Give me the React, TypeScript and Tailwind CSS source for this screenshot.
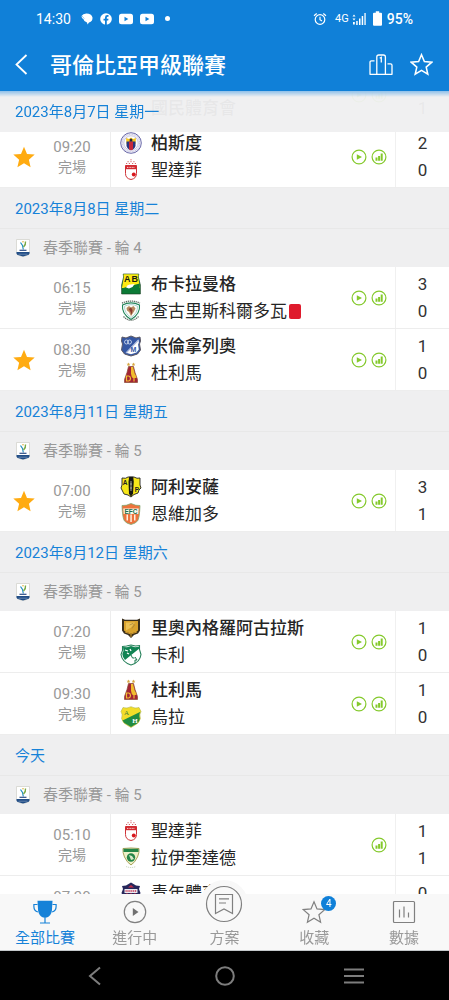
import React from 'react';

type TeamKey =
  | 'pasto' | 'santafe' | 'bucaramanga' | 'jaguares' | 'millonarios' | 'tolima'
  | 'alianza' | 'envigado' | 'rionegro' | 'cali' | 'huila' | 'equidad' | 'junior' | 'nacional';

interface Side { name: string; crest: TeamKey; score: number; winner?: boolean; redCard?: boolean }
interface Match { time: string; starred?: boolean; home?: Side; away?: Side; video?: boolean; stats?: boolean }
interface Day { date: string; round?: string; matches: Match[] }

const openingMatches: Match[] = [
  { time: '', away: { name: '國民體育會', crest: 'nacional', score: 1, winner: true }, video: true, stats: true },
  {
    time: '09:20', starred: true, video: true, stats: true,
    home: { name: '柏斯度', crest: 'pasto', score: 2, winner: true },
    away: { name: '聖達菲', crest: 'santafe', score: 0 },
  },
];

const days: Day[] = [
  {
    date: '2023年8月8日 星期二', round: '春季聯賽 - 輪 4',
    matches: [
      {
        time: '06:15', video: true, stats: true,
        home: { name: '布卡拉曼格', crest: 'bucaramanga', score: 3, winner: true },
        away: { name: '查古里斯科爾多瓦', crest: 'jaguares', score: 0, redCard: true },
      },
      {
        time: '08:30', starred: true, video: true, stats: true,
        home: { name: '米倫拿列奧', crest: 'millonarios', score: 1, winner: true },
        away: { name: '杜利馬', crest: 'tolima', score: 0 },
      },
    ],
  },
  {
    date: '2023年8月11日 星期五', round: '春季聯賽 - 輪 5',
    matches: [
      {
        time: '07:00', starred: true, video: true, stats: true,
        home: { name: '阿利安薩', crest: 'alianza', score: 3, winner: true },
        away: { name: '恩維加多', crest: 'envigado', score: 1 },
      },
    ],
  },
  {
    date: '2023年8月12日 星期六', round: '春季聯賽 - 輪 5',
    matches: [
      {
        time: '07:20', video: true, stats: true,
        home: { name: '里奧內格羅阿古拉斯', crest: 'rionegro', score: 1, winner: true },
        away: { name: '卡利', crest: 'cali', score: 0 },
      },
      {
        time: '09:30', video: true, stats: true,
        home: { name: '杜利馬', crest: 'tolima', score: 1, winner: true },
        away: { name: '烏拉', crest: 'huila', score: 0 },
      },
    ],
  },
  {
    date: '今天', round: '春季聯賽 - 輪 5',
    matches: [
      {
        time: '05:10', stats: true,
        home: { name: '聖達菲', crest: 'santafe', score: 1 },
        away: { name: '拉伊奎達德', crest: 'equidad', score: 1 },
      },
      { time: '07:30', home: { name: '青年體育會', crest: 'junior', score: 0 } },
    ],
  },
];

const crestArt: Record<TeamKey, React.ReactNode> = {
  pasto: (
    <>
      <circle cx="11" cy="11" r="10.3" fill="#f4f3fa" stroke="#6a69a8" strokeWidth="1" />
      <circle cx="11" cy="11" r="8.8" fill="none" stroke="#c3c2de" strokeWidth="1.2" strokeDasharray="1 .7" />
      <circle cx="11" cy="11" r="7.2" fill="#fff" stroke="#9a99c4" strokeWidth=".5" />
      <path d="M6 6l3 1 2-1.500 2 1.500 3-1-.6 6H6.600z" fill="#f5c71e" />
      <path d="M6.500 9.500h9v4.500q-1 3.500-4.500 4-3.500-.5-4.500-4z" fill="#27357e" />
      <path d="M9 9.500h4v8l-2 .7-2-.7z" fill="#c7283a" />
      <circle cx="11" cy="8" r="1.500" fill="#202644" />
    </>
  ),
  santafe: (
    <>
      <path d="M5.500 6.500h11v8q0 5-5.500 6-5.500-1-5.500-6z" fill="#fff" stroke="#cf3338" strokeWidth="1" />
      <path d="M5.500 6.500h11v3.700h-11z" fill="#d3282f" />
      <path d="M7 8.400h8" stroke="#fff" strokeWidth=".8" strokeDasharray="1 .6" />
      <circle cx="13.800" cy="15.500" r="2" fill="#d8161c" />
      <path d="M6 4.500h1.200M8.800 4.500H10M12 4.500h1.200M14.800 4.500H16M7.500 2.700h1.200M10.400 2.700h1.200M13.300 2.700h1.200M10.400.8h1.200" stroke="#d3555a" strokeWidth=".9" />
    </>
  ),
  bucaramanga: (
    <>
      <path d="M3.200 1h15.600l-.4 3 2 8v9H1.600v-9l2-8z" fill="#0c7a36" stroke="#173b20" strokeWidth=".6" />
      <path d="M3.500 1.300h15l-.4 3 2 10.700H1.900l2-10.700z" fill="#ffea12" />
      <text x="7.200" y="9" textAnchor="middle" fontSize="9" fontWeight="700" fontFamily="Liberation Sans, sans-serif" fill="#191c10">A</text>
      <text x="14.800" y="9" textAnchor="middle" fontSize="9" fontWeight="700" fontFamily="Liberation Sans, sans-serif" fill="#191c10">B</text>
      <path d="M1.800 15.500q5-2 9-2.500l5-1.500 4-1v5q-7 1-10 3-4 0-8-2z" fill="#0c7a36" />
      <path d="M6 14.500q1.500-3.500 4.500-3l4-.5-2 3-3.500 1.500z" fill="#fff" />
    </>
  ),
  jaguares: (
    <>
      <path d="M2 3.200Q11-1 20 3.200" fill="none" stroke="#5b6a60" strokeWidth="1.300" strokeDasharray="1.300 .7" />
      <path d="M2.500 5Q11 .8 19.500 5q1 9-8.500 14.500Q1.500 14 2.500 5z" fill="#fff" stroke="#208458" strokeWidth="1.100" />
      <path d="M4.500 6.200Q11 3 17.500 6.200q.3 7-6.500 11.300Q4.200 13 4.500 6.200z" fill="#fffdf5" stroke="#8bc2c4" strokeWidth=".7" />
      <path d="M6.500 8l2.500-2 2 1.500L13.500 6l2 2.500-1.500 3-3 4.500-2-4-2-1.500z" fill="#b98a60" />
      <path d="M11 7.500l1.500 2.500-.8 5-1-3-2-3z" fill="#8b3a30" />
      <path d="M3.500 16.500q7.500 7.500 15 0" fill="none" stroke="#5b6a60" strokeWidth="1.200" strokeDasharray="1.300 .7" />
    </>
  ),
  millonarios: (
    <>
      <path d="M2 2l4 1 5-2 5 2 4-1 .5 4-1 3 1 6-3 4-6.500 2-6.500-2-3-4 1-6-1-3z" fill="#3557a3" stroke="#5c5965" strokeWidth="1" />
      <path d="M18.500 4.500l.4 3-.8 2 .7 5-2.300 3-5.500 1.800-5-1.600z" fill="#fff" />
      <path d="M18.500 5L6 18" stroke="#aab9db" strokeWidth="1.200" />
      <circle cx="6.500" cy="7" r="2" fill="none" stroke="#d6e0f1" strokeWidth=".8" />
      <circle cx="9.500" cy="7" r="2" fill="none" stroke="#d6e0f1" strokeWidth=".8" />
      <text x="13.500" y="16.500" textAnchor="middle" fontSize="7" fontWeight="700" fontFamily="Liberation Sans, sans-serif" fill="#3557a3">M</text>
    </>
  ),
  tolima: (
    <>
      <path d="M8.500.5l.6 1.200 1.300.1-1 1 .2 1.200-1.100-.6-1.100.6.2-1.200-1-1 1.300-.1zM13.500.5l.6 1.200 1.300.1-1 1 .2 1.200-1.100-.6-1.100.6.2-1.200-1-1 1.300-.1z" fill="#d7a843" />
      <path d="M8.500 4.500h5l1.500 6 2.500 7v3h-13v-3L7 10.500z" fill="#a32435" stroke="#8b4a32" strokeWidth=".7" />
      <path d="M11 5h2l1.500 6 2 5h-4L11 12z" fill="#f0bd2d" />
      <path d="M6.500 14h2.300q1.700.5 1.700 2.500t-1.700 2.500H6.500zM11.500 14h5M14 14v5.500" fill="none" stroke="#f2bd33" strokeWidth="1.200" />
    </>
  ),
  alianza: (
    <>
      <path d="M2 2q4 1 6-1h6q3 2 6 1v7l1 3-2 2-1 3-4 1.500L11 21l-3-2-4-1-2-4-1-2 1-3z" fill="#f7e719" stroke="#222" strokeWidth=".9" />
      <path d="M9.200.8h4l.6 5-.8 12-2 3-2-3-.5-12z" fill="#161713" />
      <path d="M11 5v10M10 8h2M10 12h2" stroke="#b5b6a7" strokeWidth=".9" />
      <text x="5.200" y="9" textAnchor="middle" fontSize="6.500" fontWeight="700" fontFamily="Liberation Sans, sans-serif" fill="#222">A</text>
      <text x="16.800" y="16" textAnchor="middle" fontSize="6.500" fontWeight="700" fontFamily="Liberation Sans, sans-serif" fill="#222">P</text>
    </>
  ),
  envigado: (
    <>
      <path d="M2 2.500q4 .5 9-2 5 2.500 9 2-.5 13-2.500 15.500T11 21.500Q6.500 20.500 4.500 18T2 2.500z" fill="#ed733c" stroke="#83a66e" strokeWidth=".8" />
      <path d="M3.300 5.500h15.400l-.4 5.500H3.700z" fill="#f7faed" />
      <path d="M6.500 11.500h1.500v6H6.500zM10.300 11.500h1.500v7.500h-1.500zM14 11.500h1.500v6H14z" fill="#fff0df" />
      <text x="11" y="10.500" textAnchor="middle" fontSize="6.500" fontWeight="700" fontFamily="Liberation Sans, sans-serif" fill="#256d48">EFC</text>
    </>
  ),
  rionegro: (
    <>
      <path d="M2 1.500l3 1.200h12l3-1.200v12l-2 3-4 1.500-3 3-3-3-4-1.500-2-3z" fill="#3a2f1c" />
      <path d="M4 4h14v9.500l-2 1.500-5 1.500L6 15l-2-1.500z" fill="#d9a32e" />
      <path d="M6 5.500h9l-4 5-5 3z" fill="#ecc256" />
      <path d="M9.500 8l3.500-1.500L14.500 8 13 10l-1 1.500" fill="none" stroke="#a0803a" strokeWidth=".7" />
      <path d="M5 15l6 2 6-2M11 17v3" fill="none" stroke="#d49c2b" strokeWidth=".9" />
    </>
  ),
  cali: (
    <>
      <path d="M2.500 2.500l4-.5L11 1l4.500 1 4-.5v4l1.500 5q-1 8-10 10.500Q2 18 1 10.500l1.500-4z" fill="#fff" stroke="#26805a" strokeWidth="1.100" />
      <path d="M3 3l4 .2L11 2l4 1.200 4-.5v2L5 16Q2.500 13 2.300 10L3.500 7z" fill="#118453" />
      <path d="M5 6l3 1M7 9l2 1M10 5l1 2" stroke="#fff" strokeWidth="1.300" />
      <path d="M11 11l1.500 3h2M15 13l2 3h-2v3" fill="none" stroke="#17794d" strokeWidth="1" />
    </>
  ),
  huila: (
    <>
      <path d="M3 1.500q4 1.500 8-.8 4 2.300 8 .8l2 4q-2 3-.6 7-1.500 5-5.400 6.500L11 21.500 7 19q-4-1.500-5.400-6.500Q3 8.500 1 5.500z" fill="#f2dd28" stroke="#b0b447" strokeWidth=".6" />
      <path d="M20.500 5.800q-2 3-.6 7-1.500 5-5.200 6L11 21l-4-2.400Q4 17.500 2.500 14.500z" fill="#218c42" />
      <text x="6.500" y="9" textAnchor="middle" fontSize="7" fontFamily="Liberation Serif, serif" fill="#3f7e38">A</text>
      <text x="15" y="17" textAnchor="middle" fontSize="7" fontWeight="700" fontFamily="Liberation Serif, serif" fill="#fff">H</text>
    </>
  ),
  equidad: (
    <>
      <path d="M3 1.500q8-1 16 0 .5 4-1.500 8.500Q15 15.500 11 18q-4-2.500-6.500-8Q2.500 5.500 3 1.500z" fill="#eef0c8" stroke="#a7a259" strokeWidth="1" />
      <path d="M3.500 1.800h15v3.200h-15z" fill="#258547" />
      <circle cx="11" cy="10.500" r="4.200" fill="#258547" />
      <path d="M9 8l3 1 2 3-3 1z" fill="#d7e8c9" />
      <path d="M6 19.500q5 2 10 0" fill="none" stroke="#c0d0b5" strokeWidth=".9" strokeDasharray="1.200 .8" />
    </>
  ),
  junior: (
    <>
      <path d="M2 4l4-.5L11 .5l5 3 4 .5-1 3 1.500 4Q18 19 11 21.500 4 19 1.500 11L3 7z" fill="#27275b" />
      <path d="M4.500 7h13v4h-13z" fill="#e9e9f2" />
      <path d="M6 11.500h2v5H6zM10 11.500h2v8h-2zM14 11.500h2v5h-2z" fill="#c52c46" />
      <path d="M8 5.500l3-2.500 3 2.500z" fill="#c52c46" />
      <path d="M5.500 9h11" stroke="#c52c46" strokeWidth="1.500" strokeDasharray="1.200 .7" />
    </>
  ),
  nacional: <path d="M3 2h16v10q-2 7-8 9-6-2-8-9z" fill="#f4f4f4" />,
};

const Crest = ({ team }: { team: TeamKey }) => (
  <svg viewBox="0 0 22 22" className="size-[22px] shrink-0" aria-hidden="true">{crestArt[team]}</svg>
);

const STAR = 'M12 1.800l3 7.100 7.700.7-5.800 5.100 1.700 7.500L12 18.200l-6.600 4 1.700-7.500L1.300 9.600 9 8.900z';

const StarOutline = ({ className, width }: { className: string; width: number }) => (
  <svg viewBox="0 0 24 24" className={className} fill="none" stroke="currentColor" strokeWidth={width} strokeLinejoin="miter" aria-hidden="true">
    <path d={STAR} />
  </svg>
);

function StatusBar() {
  return (
    <div className="flex h-[37px] items-center justify-between px-9 text-sm">
      <div className="flex items-center gap-[7px]">
        <span className="w-[38px]">14:30</span>
        <svg viewBox="0 0 12 12" className="size-3" fill="currentColor" aria-hidden="true">
          <path d="M.5 3Q2 .4 5.500.5q5 0 6 4 .3 4-3.500 5L6.500 11.500 6 9.600Q3 9 2.500 6.300L1 5z" />
          <path d="M1 2.800q1 2 2.500 2.700" fill="none" stroke="#1080d8" strokeWidth=".4" />
        </svg>
        <svg viewBox="0 0 12 12" className="size-3" aria-hidden="true">
          <circle cx="6" cy="6" r="5.800" fill="#fff" />
          <path d="M5 12V7.500H3.500V5.700H5V4.500q0-2.400 2.300-2.400h1.200v1.700h-.8q-.9 0-.9.9v1h1.700l-.3 1.800H6.800V12z" fill="#1080d8" />
        </svg>
        {[0, 1].map((i) => (
          <svg key={i} viewBox="0 0 14 12" className="h-3 w-[14px]" aria-hidden="true">
            <rect y=".7" width="14" height="10.600" rx="2.500" fill="#fff" />
            <path d="M5.500 3.800L9.300 6 5.500 8.200z" fill="#1080d8" />
          </svg>
        ))}
        <span className="ml-1 size-[5px] rounded-full bg-white" />
      </div>
      <div className="flex items-center font-medium">
        <svg viewBox="0 0 14 14" className="size-[14px]" fill="none" stroke="currentColor" strokeWidth="1.200" aria-hidden="true">
          <circle cx="7" cy="7.500" r="4.800" />
          <path d="M7 4.700v3l2 1.300M1 3.700L3.700 1.500M13 3.700l-2.700-2.200" />
        </svg>
        <span className="ml-2 text-[11px] font-normal">4G</span>
        <svg viewBox="0 0 14 14" className="ml-[3px] size-[14px]" fill="currentColor" aria-hidden="true">
          <path d="M.5 4.500L2 2.500l1.500 2zM.5 6.500h3L2 8.500zM1 10h1.800v2.500H1zM4.200 9h1.500v4H4.200zM7 6.500h1.500V13H7zM9.700 4h1.500v9H9.700zM12.400 1h1.300v12h-1.300z" />
        </svg>
        <svg viewBox="0 0 9 15" className="ml-[7px] h-[15px] w-[9px]" fill="currentColor" aria-hidden="true">
          <path d="M2.800.3h3.400v1.500H8q1 0 1 1v10.900q0 1-1 1H1q-1 0-1-1V2.800q0-1 1-1h1.800z" />
        </svg>
        <span className="ml-[5px]">95%</span>
      </div>
    </div>
  );
}

function Header() {
  return (
    <header className="relative z-20 shrink-0 bg-[#1080d8] text-white">
      <StatusBar />
      <div className="flex h-[54px] items-center pr-4 pl-3">
        <button type="button" aria-label="返回" className="flex w-[38px] shrink-0 items-center">
          <svg viewBox="0 0 20 22" className="h-[22px] w-5" fill="none" stroke="currentColor" strokeWidth="1.800" aria-hidden="true">
            <path d="M14.500 2L4.500 11.500l10 9.500" />
          </svg>
        </button>
        <h1 className="flex-1 truncate pt-1 text-[22px] leading-8 font-medium">哥倫比亞甲級聯賽</h1>
        <button type="button" aria-label="積分榜" className="shrink-0">
          <svg viewBox="0 0 24 24" className="size-6" fill="none" stroke="currentColor" strokeWidth="1.300" aria-hidden="true">
            <path d="M5.500 8.800H2.500q-1.500 0-1.500 1.500v12h22v-9q0-1.500-1.500-1.500h-3" strokeLinejoin="round" />
            <path d="M7.800 22.300V5q0-2 2-2h4.600q2 0 2 2v17.300" />
            <path d="M10.700 6.300l1.600-1v5.200" />
          </svg>
        </button>
        <button type="button" aria-label="收藏聯賽" className="ml-[17px] shrink-0">
          <StarOutline className="size-[23px]" width={1.6} />
        </button>
      </div>
      <div className="pointer-events-none absolute inset-x-0 top-full h-[6px] bg-linear-to-b from-[#8fc0e9] to-transparent" />
    </header>
  );
}

const DateHeading = ({ children }: { children: React.ReactNode }) => (
  <h2 className="flex h-[41px] items-center border-b border-[#e8e8e8] bg-[#efeff0] pt-[3px] pl-[15px] text-[15px] text-[#1682d8]">{children}</h2>
);

const RoundHeading = ({ children }: { children: React.ReactNode }) => (
  <h3 className="flex h-[38px] items-center bg-[#efeff0] pl-4 text-[15px] text-[#999]">
    <svg viewBox="0 0 14 18" className="mr-[13px] h-[18px] w-[14px]" aria-hidden="true">
      <path d="M.5.500h13V14q0 2-3 2.500L7 17.800 3.500 16.500Q.5 16 .5 14z" fill="#fff" stroke="#d3d3cd" strokeWidth=".8" />
      <path d="M.5 13h13v1.500q0 1.700-3 2L7 17.500l-3.500-1Q.5 16 .5 14.500z" fill="#214d86" />
      <path d="M2.500 15.200h9" stroke="#8fa6c4" strokeWidth=".6" />
      <path d="M4.500 3.500l2 3 .8 4" fill="none" stroke="#238fc0" strokeWidth="1.200" />
      <path d="M9.500 2.500Q10 5.500 7.500 8" fill="none" stroke="#77a844" strokeWidth="1.400" />
      <path d="M3.500 11.300h7" stroke="#2c4c85" strokeWidth="1.200" />
      <circle cx="7" cy="2.800" r=".8" fill="#e0b540" />
    </svg>
    {children}
  </h3>
);

function TeamLine({ side }: { side?: Side }) {
  if (!side) return <div className="h-[27px]" />;
  return (
    <div className="flex h-[27px] items-center">
      <Crest team={side.crest} />
      <span className={side.winner ? 'ml-[9px] pt-[2px] whitespace-nowrap font-medium' : 'ml-[9px] pt-[2px] whitespace-nowrap'}>{side.name}</span>
      {side.redCard && <span role="img" aria-label="紅牌" className="ml-[2px] h-[15px] w-3 shrink-0 rounded-[2px] bg-[#df1b2d]" />}
    </div>
  );
}

function MatchRow({ match }: { match: Match }) {
  return (
    <li className="flex h-[62px] border-b border-[#ededed] bg-white">
      <div className="flex w-[111px] shrink-0 items-center border-r border-[#ededed] pl-3">
        {match.starred ? (
          <button type="button" aria-label="取消收藏" className="w-6 text-[#ffab11]">
            <svg viewBox="0 0 24 24" className="size-6" fill="currentColor" aria-hidden="true"><path d={STAR} /></svg>
          </button>
        ) : <span className="w-6" />}
        <div className="w-[72px] pt-px text-center text-sm leading-5 text-[#999]">
          <div className="text-[15px]">{match.time}</div>
          {match.time && <div>完場</div>}
        </div>
      </div>
      <div className="flex min-w-0 flex-1 items-center justify-between pr-2">
        <div className="pl-[9px] text-[17px] text-[#252525]">
          <TeamLine side={match.home} />
          <TeamLine side={match.away} />
        </div>
        <div className="flex shrink-0 gap-1 text-[#84c92c]">
          {match.video && (
            <button type="button" aria-label="影片">
              <svg viewBox="0 0 16 16" className="size-4" fill="none" stroke="currentColor" strokeWidth="1.200" aria-hidden="true">
                <circle cx="8" cy="8" r="6.900" />
                <path d="M5.800 5.200L11 8l-5.200 2.800z" fill="currentColor" stroke="none" />
              </svg>
            </button>
          )}
          {match.stats && (
            <button type="button" aria-label="統計">
              <svg viewBox="0 0 16 16" className="size-4" fill="none" stroke="currentColor" strokeWidth="1.200" aria-hidden="true">
                <circle cx="8" cy="8" r="6.900" />
                <path d="M4.500 8.500h2v3.300h-2zM7.100 7h2v4.800h-2zM9.700 4.500h2v7.300h-2z" fill="currentColor" stroke="none" />
              </svg>
            </button>
          )}
        </div>
      </div>
      <div className="flex w-[54px] shrink-0 flex-col justify-center border-l border-[#f0f0f0] text-center text-[17px] leading-[27px] text-[#333]">
        <span className="h-[27px]">{match.home?.score}</span>
        <span className="h-[27px]">{match.away?.score}</span>
      </div>
    </li>
  );
}

const navIcon = 'size-6 shrink-0';

function BottomNav() {
  const item = 'flex flex-1 flex-col items-center pt-[6px] text-[15px] leading-6 text-[#999]';
  return (
    <nav className="relative z-10 flex h-[57px] shrink-0 border-b border-[#c4c8ca] bg-[#f8f8f8]">
      <a href="#all" aria-current="page" className="flex flex-1 flex-col items-center pt-[6px] text-[15px] leading-6 text-[#1682d8]">
        <svg viewBox="0 0 24 24" className={navIcon} fill="none" stroke="currentColor" strokeWidth="1.200" aria-hidden="true">
          <path d="M4.500.8h15l-.6 10q-.8 5-5 6.700h-3.800q-4.200-1.700-5-6.700z" fill="currentColor" stroke="none" />
          <path d="M4.500 4.500H.9v2.300q0 4 4 5.200M19.500 4.500h3.600v2.300q0 4-4 5.200M12 17v6M7 23h10" />
        </svg>
        <span className="pt-[2px]">全部比賽</span>
      </a>
      <a href="#live" className={item}>
        <svg viewBox="0 0 24 24" className={navIcon} fill="none" stroke="#808080" strokeWidth="1.200" aria-hidden="true">
          <circle cx="12" cy="12" r="10.700" />
          <path d="M9.800 8l5.700 4-5.700 4z" fill="#707070" stroke="none" />
        </svg>
        <span className="pt-[2px]">進行中</span>
      </a>
      <a href="#plan" className="flex flex-1 flex-col items-center text-[15px] leading-6 text-[#999]">
        <span className="-mt-[14px] flex size-12 shrink-0 items-center justify-center rounded-full bg-[#f8f8f8]">
          <svg viewBox="0 0 38 38" className="size-[38px]" fill="none" stroke="#808080" strokeWidth="1.200" aria-hidden="true">
            <circle cx="19" cy="19" r="17.500" />
            <path d="M10.500 9.500h17v19L19 24l-8.500 4.500z" />
            <path d="M14 13.800h10M14 18h7" />
          </svg>
        </span>
        <span className="-mt-[2px]">方案</span>
      </a>
      <a href="#favourites" className={item}>
        <span className="relative size-6 shrink-0">
          <StarOutline className="size-6 text-[#808080]" width={1.2} />
          <span className="absolute -top-[4px] -right-[10px] flex size-[15px] items-center justify-center rounded-full bg-[#1080d8] text-[10px] leading-none text-white">4</span>
        </span>
        <span className="pt-[2px]">收藏</span>
      </a>
      <a href="#data" className={item}>
        <svg viewBox="0 0 24 24" className={navIcon} fill="none" stroke="#808080" strokeWidth="1.200" aria-hidden="true">
          <rect x="1.500" y="1.500" width="21" height="21" rx="1" />
          <path d="M7.500 9.500v8M12 6.500v11M16.500 12.500v5" />
        </svg>
        <span className="pt-[2px]">數據</span>
      </a>
    </nav>
  );
}

function SystemNav() {
  const button = 'flex flex-1 items-center justify-center';
  return (
    <footer className="flex h-[49px] shrink-0 bg-black px-[30px] text-[#7d7d7d]">
      <button type="button" aria-label="返回上一頁" className={button}>
        <svg viewBox="0 0 20 20" className="size-5" fill="none" stroke="currentColor" strokeWidth="2" aria-hidden="true"><path d="M15 1.500L5 10l10 8.500" /></svg>
      </button>
      <button type="button" aria-label="主畫面" className={button}>
        <svg viewBox="0 0 20 20" className="size-5" fill="none" stroke="currentColor" strokeWidth="2" aria-hidden="true"><circle cx="10" cy="10" r="8.800" /></svg>
      </button>
      <button type="button" aria-label="最近使用" className={button}>
        <svg viewBox="0 0 20 20" className="size-5" fill="none" stroke="currentColor" strokeWidth="2.200" aria-hidden="true"><path d="M0 3.500h20M0 10h20M0 16.500h20" /></svg>
      </button>
    </footer>
  );
}

export default function App() {
  return (
    <div lang="zh-Hant" className="flex h-screen flex-col overflow-hidden bg-[#efeff0] font-[Roboto,'Noto_Sans_CJK_TC',sans-serif]">
      <Header />
      <main className="min-h-0 flex-1 overflow-y-auto [scrollbar-width:none]">
        <section>
          <h2 className="sticky top-0 z-10 flex h-[41px] items-center bg-[#efeff0]/96 pt-px pl-[15px] text-[15px] text-[#1682d8]">2023年8月7日 星期一</h2>
          <ul className="-mt-[68px]">
            {openingMatches.map((m, i) => <MatchRow key={i} match={m} />)}
          </ul>
        </section>
        {days.map((day) => (
          <section key={day.date}>
            <DateHeading>{day.date}</DateHeading>
            {day.round && <RoundHeading>{day.round}</RoundHeading>}
            <ul>{day.matches.map((m) => <MatchRow key={m.time} match={m} />)}</ul>
          </section>
        ))}
      </main>
      <BottomNav />
      <SystemNav />
    </div>
  );
}
